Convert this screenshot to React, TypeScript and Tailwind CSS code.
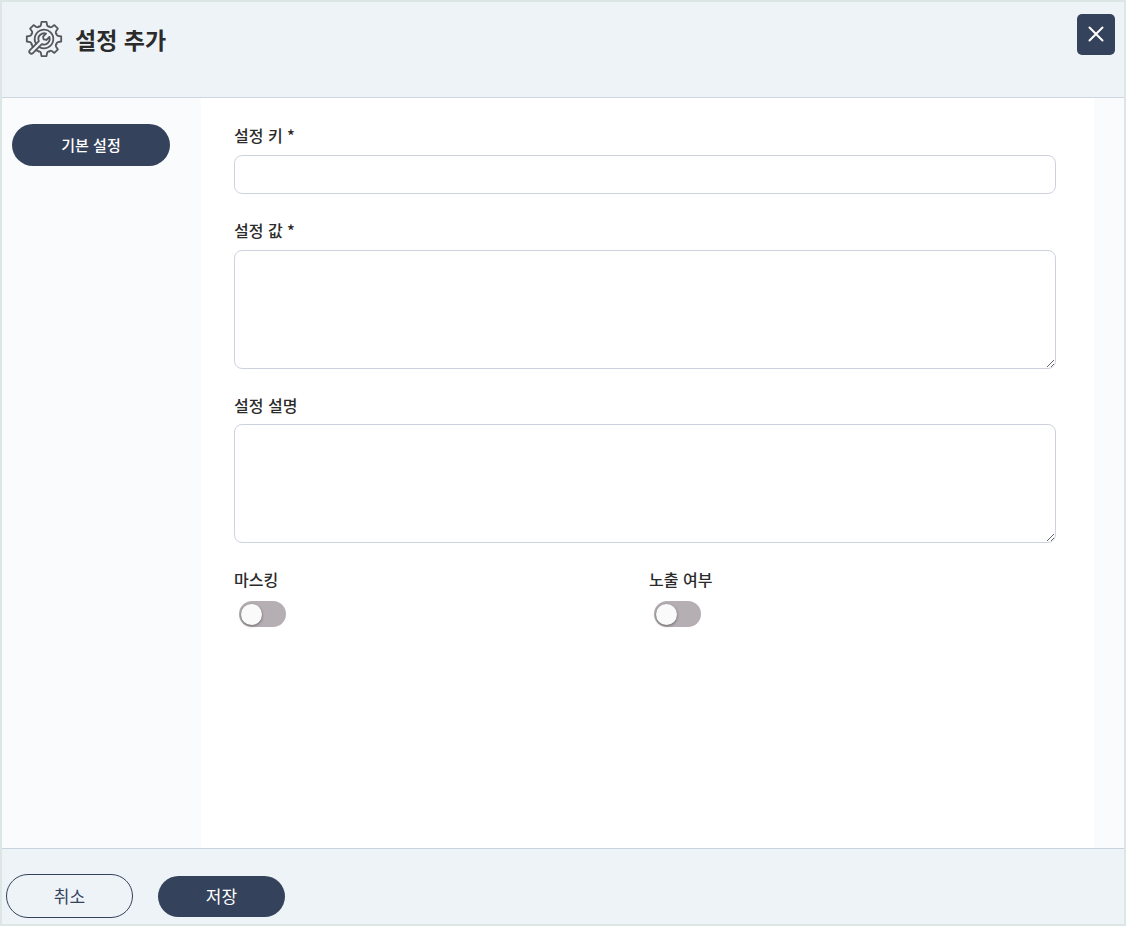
import { useState } from "react";

const toothAngles = [0, 45, 90, 135, 180, 270, 315];

function GearWrenchIcon() {
  return (
    <svg
      viewBox="-19 -19 38 38"
      className="size-[38px] shrink-0"
      fill="none"
      stroke="#55585b"
      strokeWidth="1.8"
      strokeLinecap="round"
      strokeLinejoin="round"
      aria-hidden="true"
    >
      {toothAngles.map((angle) => (
        <path
          key={angle}
          transform={`rotate(${angle})`}
          d="M-5.17-12.47C-4.4-12.2-3.3-13-3.1-14L-2.5-17.2H2.5L3.1-14C3.3-13 4.4-12.2 5.17-12.47"
        />
      ))}
      <g transform="rotate(45)">
        <path d="M-5.17 12.47-2.2 13.6M5.17 12.47 2.2 13.6" />
        <path d="M-2.2 9A9.3 9.3 0 1 1 2.2 9" />
        <path d="M-2.1 5.2V17.8a2.1 2.1 0 0 0 4.2 0V5.2C4.4 4.2 5.8 2.2 5.6-.4 5.4-2.6 4.1-4.4 2.4-5.3V-1L0 .5-2.4-1V-5.3C-4.1-4.4-5.4-2.6-5.6-.4-5.8 2.2-4.4 4.2-2.1 5.2Z" />
      </g>
    </svg>
  );
}

const labelClass = "block text-[16px] leading-[22px] font-medium text-[#2b2b2b]";
const fieldClass =
  "block w-full rounded-lg border border-[#cdd2de] bg-white px-3 py-2 text-[16px] outline-none focus:border-[#35425b]";

function Toggle({ id, label }: { id: string; label: string }) {
  const [on, setOn] = useState(false);
  return (
    <div>
      <label htmlFor={id} className={labelClass}>
        {label}
      </label>
      <input
        id={id}
        type="checkbox"
        role="switch"
        checked={on}
        onChange={(e) => setOn(e.target.checked)}
        className="mt-[11px] ml-[5px] flex h-[26px] w-[47px] cursor-pointer appearance-none items-center rounded-full bg-[#b5afb3] px-[2px] before:size-[21px] before:rounded-full before:bg-[#fafafa] before:shadow-[0_1px_3px_rgba(0,0,0,0.45)] before:content-[''] checked:bg-[#35425b] checked:before:ml-auto"
      />
    </div>
  );
}

export default function App() {
  return (
    <div
      lang="ko"
      className="flex min-h-screen flex-col border-2 border-[#dce6e4] bg-white font-['Noto_Sans_CJK_KR',sans-serif]"
    >
      <header className="flex items-start justify-between border-b border-[#ced7df] bg-[#eef3f8] pt-3 pr-[9px] pb-[39px] pl-[23px]">
        <div className="flex items-center gap-3 pt-[6px]">
          <GearWrenchIcon />
          <h1 className="text-[23px] leading-[34px] font-bold text-[#2b2b2b]">설정 추가</h1>
        </div>
        <button
          type="button"
          aria-label="닫기"
          className="flex h-[41px] w-[38px] items-center justify-center rounded-[5px] bg-[#35425b] pb-px text-white"
        >
          <svg viewBox="0 0 16 16" className="size-4" fill="none" stroke="currentColor" strokeWidth="2" strokeLinecap="round" aria-hidden="true">
            <path d="M1.5 1.5l13 13M14.5 1.5l-13 13" />
          </svg>
        </button>
      </header>

      <div className="flex flex-1 bg-[#fafbfd] pr-[30px]">
        <nav className="w-[199px] shrink-0 pt-[26px] pr-[31px] pl-[10px]">
          <button
            type="button"
            className="h-[42px] w-full rounded-full bg-[#35425b] text-[15px] font-medium text-white"
          >
            기본 설정
          </button>
        </nav>

        <main className="min-w-0 flex-1 bg-white pt-[26px] pr-[38px] pb-8 pl-[33px]">
          <form id="setting-form" className="flex flex-col gap-[25px]">
            <div>
              <label htmlFor="key" className={labelClass}>
                설정 키 *
              </label>
              <input id="key" type="text" className={`${fieldClass} mt-[9px] h-[39px]`} />
            </div>
            <div>
              <label htmlFor="value" className={labelClass}>
                설정 값 *
              </label>
              <textarea id="value" className={`${fieldClass} mt-[9px] h-[119px] resize`} />
            </div>
            <div>
              <label htmlFor="description" className={labelClass}>
                설정 설명
              </label>
              <textarea id="description" className={`${fieldClass} mt-[8px] h-[119px] resize`} />
            </div>
            <div className="grid grid-cols-2 gap-2">
              <Toggle id="masking" label="마스킹" />
              <Toggle id="exposure" label="노출 여부" />
            </div>
          </form>
        </main>
      </div>

      <footer className="flex items-center gap-[25px] border-t border-[#c9d3e0] bg-[#eef3f8] pt-[25px] pb-[6px] pl-1">
        <button
          type="button"
          className="h-11 w-[127px] rounded-full border border-[#35425b] pb-px text-[17px] text-[#35425b]"
        >
          취소
        </button>
        <button
          type="submit"
          form="setting-form"
          className="h-[41px] w-[127px] rounded-full bg-[#35425b] pb-px text-[17px] text-white"
        >
          저장
        </button>
      </footer>
    </div>
  );
}
